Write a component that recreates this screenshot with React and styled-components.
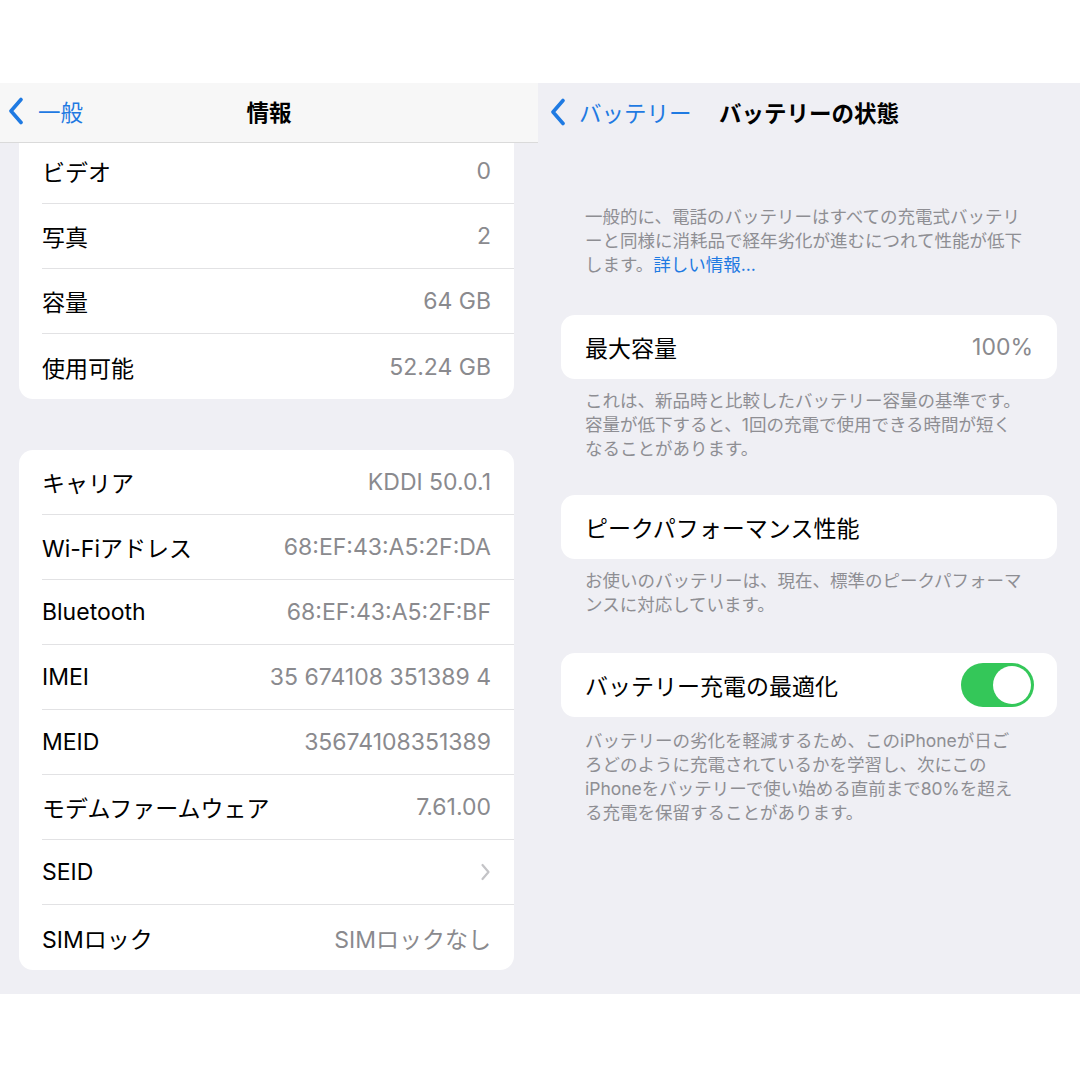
import React from "react";
import styled, { createGlobalStyle } from "styled-components";

const GlobalStyle = createGlobalStyle`
  body {
    margin: 0;
    background: #fff;
    font-family: "Inter", "Noto Sans CJK JP", sans-serif;
    -webkit-font-smoothing: antialiased;
  }
`;

const Page = styled.div`
  width: 1080px;
  height: 1080px;
  padding-top: 83px;
  box-sizing: border-box;
  background: #fff;
`;

const Strip = styled.div`
  display: grid;
  grid-template-columns: 538px 542px;
  height: 911px;
`;

const Panel = styled.section`
  display: flex;
  flex-direction: column;
  background: #efeff4;
  overflow: hidden;
`;

const NavBar = styled.header`
  position: relative;
  z-index: 1;
  height: 60px;
  box-sizing: border-box;
  display: grid;
  grid-template-columns: 1fr auto 1fr;
  align-items: center;
  padding-bottom: 3px;
  background: ${(p) => (p.$bar ? "#f7f7f7" : "transparent")};
  border-bottom: ${(p) => (p.$bar ? "1px solid #dadada" : "none")};
`;

const BackLink = styled.a`
  display: flex;
  align-items: center;
  gap: ${(p) => p.$gap}px;
  margin-left: ${(p) => p.$inset}px;
  color: #1f7ae2;
  font-size: 22.5px;
  text-decoration: none;
`;

const NavTitle = styled.h1`
  margin: 0;
  font-size: 22.5px;
  font-weight: 700;
  color: #000;
`;

const ListCard = styled.div`
  margin: ${(p) => (p.$cut ? "-4px" : "51px")} 24px 0 19px;
  background: #fff;
  border-radius: ${(p) => (p.$cut ? "0 0 14px 14px" : "14px")};
`;

const Row = styled.div`
  height: 65px;
  box-sizing: border-box;
  margin-left: 23px;
  padding-right: 23px;
  display: flex;
  align-items: center;
  justify-content: space-between;
  border-bottom: 1px solid #e2e2e4;
  font-size: 23px;
  &:last-child {
    border-bottom: none;
  }
`;

const Label = styled.span`
  color: #000;
`;

const Value = styled.span`
  color: #8a8a8e;
`;

const RightBody = styled.div`
  padding: 0 23px;
  display: flex;
  flex-direction: column;
`;

const Note = styled.p`
  margin: ${(p) => p.$top}px 0 0;
  padding: 0 24px;
  font-size: 17.5px;
  line-height: 24px;
  color: #8e8e93;
  white-space: nowrap;
`;

const Link = styled.span`
  color: #1f7ae2;
`;

const GroupCard = styled.div`
  margin-top: ${(p) => p.$top}px;
  height: 64px;
  box-sizing: border-box;
  padding: 0 24px;
  display: flex;
  align-items: center;
  justify-content: space-between;
  background: #fff;
  border-radius: 14px;
  font-size: 23px;
`;

const Toggle = styled.div`
  width: 73px;
  height: 44px;
  box-sizing: border-box;
  padding: 3px;
  margin-right: -1px;
  display: flex;
  justify-content: flex-end;
  border-radius: 22px;
  background: #34c759;
`;

const Knob = styled.div`
  width: 38px;
  height: 38px;
  border-radius: 50%;
  background: #fff;
`;

const BackChevron = () => (
  <svg width="16" height="28" viewBox="0 0 16 28">
    <path
      d="M13 2.5 L3 14 L13 25.5"
      fill="none"
      stroke="#1f7ae2"
      strokeWidth="3.6"
      strokeLinecap="round"
      strokeLinejoin="round"
    />
  </svg>
);

const Disclosure = () => (
  <svg width="11" height="18" viewBox="0 0 11 18">
    <path
      d="M2.5 2 L8.5 9 L2.5 16"
      fill="none"
      stroke="#c4c4c7"
      strokeWidth="2.2"
      strokeLinecap="round"
      strokeLinejoin="round"
    />
  </svg>
);

const storage = [
  ["ビデオ", "0"],
  ["写真", "2"],
  ["容量", "64 GB"],
  ["使用可能", "52.24 GB"],
];

const network = [
  ["キャリア", "KDDI 50.0.1"],
  ["Wi-Fiアドレス", "68:EF:43:A5:2F:DA"],
  ["Bluetooth", "68:EF:43:A5:2F:BF"],
  ["IMEI", "35 674108 351389 4"],
  ["MEID", "35674108351389"],
  ["モデムファームウェア", "7.61.00"],
  ["SEID", null],
  ["SIMロック", "SIMロックなし"],
];

const InfoPanel = () => (
  <Panel>
    <NavBar $bar>
      <BackLink $inset={8} $gap={14}>
        <BackChevron />
        一般
      </BackLink>
      <NavTitle>情報</NavTitle>
    </NavBar>
    <ListCard $cut>
      {storage.map(([k, v]) => (
        <Row key={k}>
          <Label>{k}</Label>
          <Value>{v}</Value>
        </Row>
      ))}
    </ListCard>
    <ListCard>
      {network.map(([k, v]) => (
        <Row key={k}>
          <Label>{k}</Label>
          {v ? <Value>{v}</Value> : <Disclosure />}
        </Row>
      ))}
    </ListCard>
  </Panel>
);

const BatteryPanel = () => (
  <Panel>
    <NavBar>
      <BackLink $inset={12} $gap={13}>
        <BackChevron />
        バッテリー
      </BackLink>
      <NavTitle>バッテリーの状態</NavTitle>
    </NavBar>
    <RightBody>
      <Note $top={62}>
        一般的に、電話のバッテリーはすべての充電式バッテリ
        <br />
        ーと同様に消耗品で経年劣化が進むにつれて性能が低下
        <br />
        します。<Link>詳しい情報...</Link>
      </Note>
      <GroupCard $top={38}>
        <Label>最大容量</Label>
        <Value>100%</Value>
      </GroupCard>
      <Note $top={10}>
        これは、新品時と比較したバッテリー容量の基準です。
        <br />
        容量が低下すると、1回の充電で使用できる時間が短く
        <br />
        なることがあります。
      </Note>
      <GroupCard $top={34}>
        <Label>ピークパフォーマンス性能</Label>
      </GroupCard>
      <Note $top={10}>
        お使いのバッテリーは、現在、標準のピークパフォーマ
        <br />
        ンスに対応しています。
      </Note>
      <GroupCard $top={36}>
        <Label>バッテリー充電の最適化</Label>
        <Toggle>
          <Knob />
        </Toggle>
      </GroupCard>
      <Note $top={12}>
        バッテリーの劣化を軽減するため、このiPhoneが日ご
        <br />
        ろどのように充電されているかを学習し、次にこの
        <br />
        iPhoneをバッテリーで使い始める直前まで80%を超え
        <br />
        る充電を保留することがあります。
      </Note>
    </RightBody>
  </Panel>
);

export default function App() {
  return (
    <>
      <GlobalStyle />
      <Page>
        <Strip>
          <InfoPanel />
          <BatteryPanel />
        </Strip>
      </Page>
    </>
  );
}
